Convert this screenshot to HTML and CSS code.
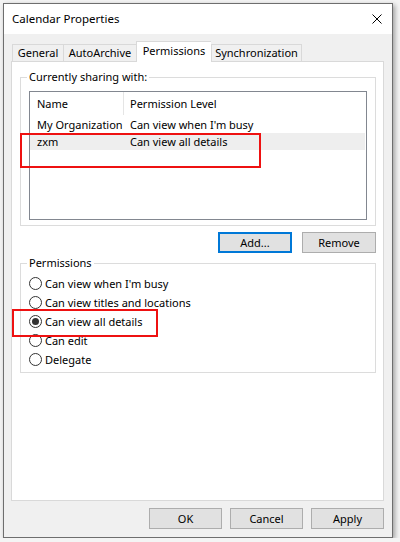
FILE: index.html
```html
<!DOCTYPE html>
<html lang="en">
<head>
  <meta charset="UTF-8">
  <meta name="viewport" content="width=device-width, initial-scale=1.0">
  <title>Calendar Properties</title>
  <link rel="stylesheet" href="styles.css">
</head>
<body>
  <div class="window">
    <div class="titlebar">
      <span class="title">Calendar Properties</span>
      <svg class="close" width="10" height="10" viewBox="0 0 10 10">
        <path d="M0.5 0.5 L9.5 9.5 M9.5 0.5 L0.5 9.5" stroke="#000" stroke-width="1" fill="none"/>
      </svg>
    </div>

    <div class="content">
      <!-- tab strip -->
      <div class="tabs">
        <div class="tab tab-general">General</div>
        <div class="tab tab-archive">AutoArchive</div>
        <div class="tab tab-perms active">Permissions</div>
        <div class="tab tab-sync">Synchronization</div>
      </div>

      <div class="panel">
        <fieldset class="group share">
          <legend>Currently sharing with:</legend>
          <div class="list">
            <div class="list-head">
              <span class="col-name">Name</span>
              <span class="col-level">Permission Level</span>
            </div>
            <div class="list-row">
              <span class="col-name">My Organization</span>
              <span class="col-level">Can view when I'm busy</span>
            </div>
            <div class="list-row selected">
              <span class="col-name">zxm</span>
              <span class="col-level">Can view all details</span>
            </div>
          </div>
        </fieldset>

        <div class="actions">
          <button class="btn default">Add...</button>
          <button class="btn">Remove</button>
        </div>

        <fieldset class="group perms">
          <legend>Permissions</legend>
          <label class="radio"><span class="dot"></span>Can view when I'm busy</label>
          <label class="radio"><span class="dot"></span>Can view titles and locations</label>
          <label class="radio"><span class="dot checked"></span>Can view all details</label>
          <label class="radio"><span class="dot"></span>Can edit</label>
          <label class="radio"><span class="dot"></span>Delegate</label>
        </fieldset>
      </div>

      <div class="footer">
        <button class="btn">OK</button>
        <button class="btn">Cancel</button>
        <button class="btn">Apply</button>
      </div>
    </div>

    <!-- red annotation boxes -->
    <div class="mark mark-user"></div>
    <div class="mark mark-radio"></div>
  </div>
</body>
</html>
```

FILE: styles.css
```css
* {
  box-sizing: border-box;
}

body {
  margin: 0;
  padding: 3px 0 0 3px;
  background-color: #f4f4f4;
  font-family: "Noto Sans", "Open Sans", sans-serif;
  font-size: 11px;
  color: #000;
}

.window {
  position: relative;
  width: 390px;
  height: 535px;
  border: 1px solid #6e6e6e;
  background-color: #f0f0f0;
  box-shadow: 2px 2px 5px rgba(0, 0, 0, 0.35);
}

.titlebar {
  height: 30px;
  background-color: #fff;
  display: flex;
  align-items: center;
  justify-content: space-between;
  padding: 0 10px 1px 8px;
}

.title {
  font-size: 11.5px;
}

.content {
  padding: 7px 8px 0 7px;
}

.tabs {
  display: flex;
  align-items: flex-end;
  height: 20px;
  margin-left: 1px;
}

.tab {
  height: 17px;
  line-height: 16px;
  text-align: center;
  border: 1px solid #d9d9d9;
  border-bottom: none;
  border-right: none;
  background-color: #f0f0f0;
}

.tab-general { width: 51px; }
.tab-archive { width: 73px; }
.tab-perms { width: 75px; }
.tab-sync { width: 91px; border-right: 1px solid #d9d9d9; }

.tab.active {
  height: 21px;
  line-height: 18px;
  background-color: #fff;
  margin-bottom: -1px;
  position: relative;
  z-index: 1;
}

.panel {
  height: 440px;
  border: 1px solid #d9d9d9;
  background-color: #fff;
  padding: 0 7px 0 8px;
}

.group {
  margin: 0;
  border: 1px solid #dcdcdc;
  min-width: 0;
}

.group legend {
  padding: 0 2px;
  margin-left: -2px;
  line-height: 14px;
}

.share {
  margin-top: 8px;
  width: 356px;
  padding: 7px 8px 5px 8px;
}

.list {
  height: 129px;
  border: 1px solid #828790;
}

.list-head,
.list-row {
  display: flex;
  width: 335px;
}

.list-head {
  height: 23px;
  line-height: 23px;
}

.list-head .col-name {
  border-right: 1px solid #e5e5e5;
}

.list-row {
  height: 17px;
  line-height: 17px;
}

.list-row:nth-child(2) {
  margin-top: 1px;
}

.list-row.selected {
  background-color: #eeeeee;
}

.col-name {
  width: 94px;
  padding-left: 7px;
  white-space: nowrap;
}

.col-level {
  padding-left: 6px;
  white-space: nowrap;
}

.actions {
  display: flex;
  justify-content: flex-end;
  gap: 10px;
  width: 356px;
  margin-top: 6px;
}

.btn {
  width: 74px;
  height: 21px;
  padding: 0;
  font-family: inherit;
  font-size: 11px;
  color: #000;
  background-color: #e1e1e1;
  border: 1px solid #adadad;
}

.btn.default {
  border: 2px solid #0078d7;
}

.perms {
  margin-top: 3px;
  width: 356px;
  padding: 4px 8px 3px 8px;
}

.radio {
  display: flex;
  align-items: center;
  height: 19px;
  gap: 3px;
}

.dot {
  width: 13px;
  height: 13px;
  border: 1px solid #333;
  border-radius: 50%;
  display: flex;
  align-items: center;
  justify-content: center;
}

.dot.checked::after {
  content: "";
  width: 7px;
  height: 7px;
  border-radius: 50%;
  background-color: #333;
}

.footer {
  display: flex;
  justify-content: flex-end;
  gap: 8px;
  margin-top: 7px;
}

.footer .btn {
  width: 73px;
}

.mark {
  position: absolute;
  border: 2px solid #ee1111;
}

.mark-user {
  left: 16px;
  top: 129px;
  width: 241px;
  height: 35px;
}

.mark-radio {
  left: 8px;
  top: 305px;
  width: 146px;
  height: 28px;
}
```
